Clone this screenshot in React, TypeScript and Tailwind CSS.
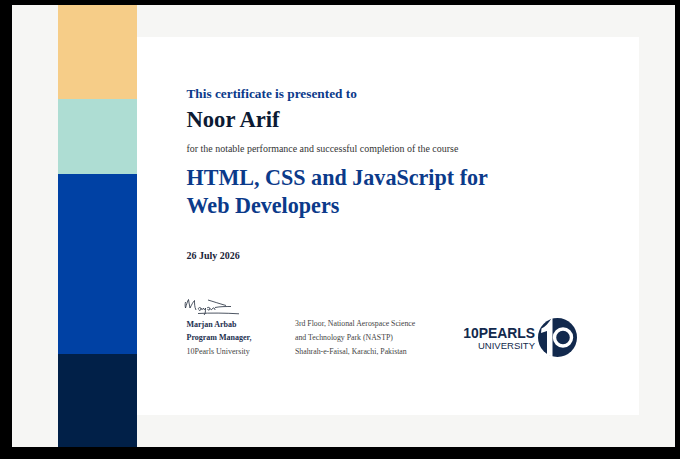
const serif = "font-['Liberation_Serif',_'Times_New_Roman',_serif]";

function Signature() {
  return (
    <svg width="56" height="20" viewBox="0 0 56 20" fill="none" stroke="#1f2a3a" strokeWidth="0.8" className="-ml-[3px] block">
      <path d="M1.5 4 C1 6 1 8 1.5 10 C2.5 6.5 3.5 3 4.5 1.5 C5 4.5 5.5 7.5 6 10 C7.5 7 9 4 10.5 2.5 C10.5 5.5 10.5 9 12 12" />
      <path d="M14 11 C15 9 17 9 17 11 C17 12.5 15 13 14.5 11.5 M17 10 C17.5 12 18.5 12 19.5 10 C19.5 12 21 12 21.5 10 C21.5 13 21.5 16 20 17 M23 10 C24 9 26 9 26 11 C25.5 12.5 24 12.5 23.5 11 M26 10.5 C27 12 28 12 29 10 C30 9.5 31 10.5 31 12" />
      <path d="M24 2 C29 3.5 35 5.5 42 7.5 M31 9.5 C36 8.5 42 8.5 47 8.5" />
      <path d="M14 15.5 C26 14.8 42 15 55 15.8" />
    </svg>
  );
}

function LogoMark() {
  return (
    <svg width="39" height="39" viewBox="0 0 39 39" className="block shrink-0">
      <circle cx="19.5" cy="19.5" r="19.5" fill="#12294d" />
      <path d="M3.5 10.5 C7 9 10.5 5 13.5 0.5 L14.5 0.5 L14.5 38.5 L9 37 L9 13 L3 15 Z" fill="#fff" />
      <circle cx="25" cy="19.5" r="8.5" fill="none" stroke="#fff" strokeWidth="3.4" />
    </svg>
  );
}

export default function App() {
  return (
    <div className="h-[459px] w-[680px] overflow-hidden bg-black pt-[5px] pr-[5px] pb-3 pl-3">
      <div className="flex h-full bg-[#f6f6f4] pl-[46px]">
        <div className="flex w-[79px] shrink-0 flex-col">
          <div className="h-[94px] bg-[#f6cd88]" />
          <div className="h-[75px] bg-[#aeddd3]" />
          <div className="h-[180px] bg-[#0041a4]" />
          <div className="flex-1 bg-[#012048]" />
        </div>
        <div className="flex-1 pt-8 pr-9 pb-8">
          <div className={`flex h-full flex-col bg-white pt-[49px] pl-[49.5px] ${serif}`}>
            <p className="text-[13.3px] leading-[16px] font-bold text-[#0b3a8a]">This certificate is presented to</p>
            <p className="mt-[5px] text-[22.6px] leading-[26px] font-bold text-[#0c1a33]">Noor Arif</p>
            <p className="mt-[10px] text-[9.95px] leading-[12px] text-[#333]">
              for the notable performance and successful completion of the course
            </p>
            <p className="mt-[9px] text-[22.1px] leading-[27.5px] font-bold text-[#0b3a8a]">
              HTML, CSS and JavaScript for
              <br />
              Web Developers
            </p>
            <p className="mt-[31px] text-[10px] leading-[12px] font-bold text-[#1a2438]">26 July 2026</p>

            <div className="mt-[35.5px] flex items-end">
              <div className="mb-px w-[108.5px]">
                <Signature />
                <p className="text-[8px] leading-[13.5px] font-bold text-[#1c2f4f]">Marjan Arbab</p>
                <p className="text-[8px] leading-[13.5px] font-bold text-[#1c2f4f]">Program Manager,</p>
                <p className="text-[8px] leading-[13.5px] text-[#444]">10Pearls University</p>
              </div>
              <div className="w-[168px] text-[7.8px] leading-[14px] text-[#444]">
                <p>3rd Floor, National Aerospace Science</p>
                <p>and Technology Park (NASTP)</p>
                <p>Shahrah-e-Faisal, Karachi, Pakistan</p>
              </div>
              <div className="mb-[2px] flex items-center gap-[3px]">
                <div className="mt-[2px] flex w-[72px] flex-col items-end font-['Liberation_Sans',_Arial,_sans-serif] text-[#12294d]">
                  <span className="text-[13.9px] leading-[13px] font-bold whitespace-nowrap">10PEARLS</span>
                  <span className="text-[9.5px] leading-[11px] whitespace-nowrap">UNIVERSITY</span>
                </div>
                <LogoMark />
              </div>
            </div>
          </div>
        </div>
      </div>
    </div>
  );
}
